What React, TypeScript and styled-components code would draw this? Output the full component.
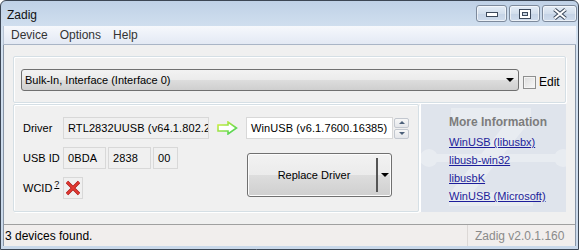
import styled, { createGlobalStyle } from 'styled-components'

const Global = createGlobalStyle`
  html, body {
    margin: 0;
    padding: 0;
    background: #ffffff;
  }
  body {
    font-family: "Liberation Sans", Arial, sans-serif;
    font-size: 11px;
    color: #000;
  }
`

const Window = styled.div`
  width: 579px;
  height: 250px;
  box-sizing: border-box;
  border: 1px solid #3c4654;
  border-radius: 6px 6px 0 0;
  background: linear-gradient(#bfd1e6, #d3e1f0 30px, #c9d8ea);
  padding: 0 2px 3px 2px;
  display: flex;
  flex-direction: column;
  overflow: hidden;
`

const TitleBar = styled.div`
  height: 25px;
  display: flex;
  align-items: flex-start;
  justify-content: space-between;
`

const Title = styled.div`
  font-size: 12px;
  color: #111;
  padding: 7px 0 0 4px;
`

const Caption = styled.div`
  display: flex;
  gap: 2px;
  padding-top: 4px;
  margin-right: -1px;
`

const CapButton = styled.div<{ $w: number }>`
  width: ${(p) => p.$w}px;
  height: 17px;
  box-sizing: border-box;
  border: 1px solid #7d8a9c;
  border-radius: 3px;
  background: linear-gradient(#e4edf7, #d2deec 50%, #c4d3e6 51%, #cfdcec);
  box-shadow: inset 0 0 0 1px rgba(255, 255, 255, 0.6);
  display: flex;
  align-items: center;
  justify-content: center;
`

const MenuBar = styled.div`
  height: 18px;
  display: flex;
  align-items: center;
  background: linear-gradient(#f6f8fc, #e3e9f4);
  border-bottom: 1px solid #a9b5c6;
  border-left: 1px solid #b8c4d4;
  padding-left: 2px;
`

const MenuItem = styled.div`
  font-size: 12px;
  color: #333;
  padding: 0 7px 0 5px;
`

const Client = styled.div`
  flex: 1;
  background: #f0f0f0;
  border-left: 1px solid #8895a6;
  border-right: 1px solid #8895a6;
  display: flex;
  flex-direction: column;
  padding: 11px 9px 0 9px;
`

const GroupBox = styled.div`
  box-sizing: border-box;
  border: 1px solid #d5dfe5;
  border-radius: 2px;
  box-shadow: inset 1px 1px 0 #ffffff, 1px 1px 0 #ffffff;
`

const TopGroup = styled(GroupBox)`
  height: 47px;
  padding: 12px 0 0 7px;
  display: flex;
  align-items: flex-start;
  gap: 4px;
`

const Combo = styled.div`
  width: 498px;
  height: 22px;
  box-sizing: border-box;
  border: 1px solid #707070;
  border-radius: 3px;
  background: linear-gradient(#f2f2f2, #ebebeb 50%, #dddddd 51%, #cfcfcf);
  display: flex;
  align-items: center;
  justify-content: space-between;
  padding: 0 4px 0 3px;
`

const DownArrow = styled.div<{ $size?: number }>`
  width: 0;
  height: 0;
  border-left: ${(p) => p.$size ?? 4}px solid transparent;
  border-right: ${(p) => p.$size ?? 4}px solid transparent;
  border-top: ${(p) => p.$size ?? 4}px solid #000;
`

const CheckRow = styled.label`
  display: flex;
  align-items: center;
  gap: 3px;
  margin-top: 6px;
  font-size: 12px;
`

const CheckBox = styled.div`
  width: 13px;
  height: 13px;
  box-sizing: border-box;
  border: 1px solid #8e8f8f;
  background: linear-gradient(135deg, #dcdcdc, #f8f8f8);
  box-shadow: inset 0 0 0 1px #f4f4f4;
`

const Lower = styled.div`
  display: flex;
  gap: 1px;
  margin-top: 1px;
  height: 108px;
`

const DriverGroup = styled(GroupBox)`
  width: 406px;
  padding: 12px 0 0 9px;
  display: grid;
  grid-template-columns: 40px 146px 37px 163px;
  grid-template-rows: 22px 22px 22px;
  row-gap: 8px;
  align-items: center;
`

const Label = styled.div<{ $col?: number }>`
  grid-column: ${(p) => p.$col ?? 'auto'};
  font-size: 11px;
  color: #000;
`

const Sup = styled.sup`
  font-size: 9px;
  text-decoration: underline;
  margin-left: 2px;
  vertical-align: 5px;
  line-height: 0;
`

const Field = styled.div<{ $w?: number; $white?: boolean; $icon?: boolean }>`
  width: ${(p) => (p.$w ? `${p.$w}px` : '100%')};
  height: 22px;
  box-sizing: border-box;
  border: 1px solid #d8d8d8;
  background: ${(p) => (p.$white ? '#ffffff' : '#f0f0f0')};
  padding: ${(p) => (p.$icon ? '0' : '0 0 0 4px')};
  display: flex;
  align-items: center;
  justify-content: ${(p) => (p.$icon ? 'center' : 'flex-start')};
  white-space: nowrap;
  overflow: hidden;
  font-size: 11px;
  letter-spacing: 0.1px;
`

const IdRow = styled.div`
  display: flex;
  gap: 2px;
`

const ArrowCell = styled.div`
  display: flex;
  justify-content: center;
`

const TargetRow = styled.div`
  display: flex;
  gap: 1px;
  align-items: center;
`

const Spinner = styled.div`
  display: flex;
  flex-direction: column;
  gap: 1px;
`

const SpinButton = styled.div`
  width: 15px;
  height: 10px;
  box-sizing: border-box;
  border: 1px solid #c2c7cf;
  border-radius: 2px;
  background: linear-gradient(#f7f7f7, #e4e6ea);
  display: flex;
  align-items: center;
  justify-content: center;
`

const SpinTri = styled.div<{ $up?: boolean }>`
  width: 0;
  height: 0;
  border-left: 3px solid transparent;
  border-right: 3px solid transparent;
  ${(p) => (p.$up ? 'border-bottom: 3px solid #4c607a;' : 'border-top: 3px solid #4c607a;')}
`

const ReplaceButton = styled.div`
  grid-column: 4;
  grid-row: 2 / 4;
  align-self: start;
  margin: 6px 0 0 1px;
  width: 145px;
  height: 44px;
  box-sizing: border-box;
  border: 1px solid #707070;
  border-radius: 3px;
  background: linear-gradient(#f2f2f2, #ebebeb 50%, #dddddd 51%, #cfcfcf);
  box-shadow: inset 0 0 0 1px #fcfcfc;
  display: flex;
  align-items: center;
`

const ReplaceLabel = styled.div`
  flex: 1;
  text-align: center;
  font-size: 11px;
  padding-left: 4px;
`

const SplitPart = styled.div`
  width: 13px;
  align-self: stretch;
  margin: 4px 0;
  border-left: 2px solid #555;
  display: flex;
  align-items: center;
  justify-content: center;
`

const InfoPanel = styled.div`
  width: 146px;
  position: relative;
  overflow: hidden;
  background: #dfe4ec;
  border-left: 1px solid #ffffff;
  padding: 11px 0 0 28px;
  box-sizing: border-box;
  display: flex;
  flex-direction: column;
`

const Watermark = styled.svg`
  position: absolute;
  left: 0;
  top: 0;
`

const InfoTitle = styled.div`
  position: relative;
  font-size: 12px;
  font-weight: bold;
  color: #7c7c7c;
  line-height: 14px;
  margin-bottom: 4px;
`

const InfoLink = styled.a`
  position: relative;
  font-size: 11px;
  color: #1d1d9a;
  text-decoration: underline;
  line-height: 18px;
`

const StatusBar = styled.div`
  margin: 12px -9px 0;
  height: 22px;
  box-sizing: border-box;
  border-top: 1px solid #a0a0a0;
  background: #f1eeed;
  display: flex;
  align-items: center;
`

const StatusText = styled.div`
  flex: 1;
  font-size: 12px;
  padding-left: 1px;
`

const StatusVersion = styled.div`
  width: 100px;
  align-self: stretch;
  display: flex;
  align-items: center;
  padding-left: 7px;
  border-left: 1px solid #dcd8d6;
  font-size: 12px;
  color: #8a8a8a;
`

const GreenArrow = () => (
  <svg width="21" height="14" viewBox="0 0 21 14">
    <defs>
      <linearGradient id="ga" x1="0" y1="0" x2="1" y2="1">
        <stop offset="0" stopColor="#d8f03a" />
        <stop offset="1" stopColor="#39d05a" />
      </linearGradient>
    </defs>
    <polygon
      points="1,4 11,4 11,1 19.5,7 11,13 11,10 1,10"
      fill="#ffffff"
      stroke="url(#ga)"
      strokeWidth="1.6"
    />
  </svg>
)

const RedX = () => (
  <svg width="16" height="16" viewBox="0 0 16 16">
    <path d="M2 2 L14 14 M14 2 L2 14" stroke="#a51212" strokeWidth="3.2" />
    <path d="M2 2 L14 14 M14 2 L2 14" stroke="#e23a32" strokeWidth="2" />
  </svg>
)

const App = () => {
  return (
    <>
      <Global />
      <Window>
        <TitleBar>
          <Title>Zadig</Title>
          <Caption>
            <CapButton $w={31}>
              <svg width="12" height="6" viewBox="0 0 12 6">
                <rect x="0.5" y="1.5" width="11" height="4" fill="#fff" stroke="#3d4a5c" />
              </svg>
            </CapButton>
            <CapButton $w={31}>
              <svg width="12" height="10" viewBox="0 0 12 10">
                <rect x="0.5" y="0.5" width="11" height="9" fill="#fff" stroke="#3d4a5c" />
                <rect x="3.5" y="3.5" width="5" height="3" fill="#c8d4e2" stroke="#3d4a5c" />
              </svg>
            </CapButton>
            <CapButton $w={35}>
              <svg width="16" height="12" viewBox="0 0 16 12">
                <path d="M2.5 1.5 L13.5 10.5 M13.5 1.5 L2.5 10.5" stroke="#3d4a5c" strokeWidth="4" />
                <path d="M2.5 1.5 L13.5 10.5 M13.5 1.5 L2.5 10.5" stroke="#ffffff" strokeWidth="2" />
              </svg>
            </CapButton>
          </Caption>
        </TitleBar>
        <MenuBar>
          <MenuItem>Device</MenuItem>
          <MenuItem>Options</MenuItem>
          <MenuItem>Help</MenuItem>
        </MenuBar>
        <Client>
          <TopGroup>
            <Combo>
              <span>Bulk-In, Interface (Interface 0)</span>
              <DownArrow />
            </Combo>
            <CheckRow>
              <CheckBox />
              Edit
            </CheckRow>
          </TopGroup>
          <Lower>
            <DriverGroup>
              <Label>Driver</Label>
              <Field>RTL2832UUSB (v64.1.802.20</Field>
              <ArrowCell>
                <GreenArrow />
              </ArrowCell>
              <TargetRow>
                <Field $w={147} $white>WinUSB (v6.1.7600.16385)</Field>
                <Spinner>
                  <SpinButton>
                    <SpinTri $up />
                  </SpinButton>
                  <SpinButton>
                    <SpinTri />
                  </SpinButton>
                </Spinner>
              </TargetRow>

              <Label>USB ID</Label>
              <IdRow>
                <Field $w={43}>0BDA</Field>
                <Field $w={43}>2838</Field>
                <Field $w={25}>00</Field>
              </IdRow>
              <ReplaceButton>
                <ReplaceLabel>Replace Driver</ReplaceLabel>
                <SplitPart>
                  <DownArrow />
                </SplitPart>
              </ReplaceButton>

              <Label $col={1}>
                WCID<Sup>?</Sup>
              </Label>
              <Field $w={20} $icon>
                <RedX />
              </Field>
            </DriverGroup>
            <InfoPanel>
              <Watermark width="146" height="108" viewBox="0 0 146 108">
                <g fill="#ffffff" opacity="0.3">
                  <polygon points="30,4 110,4 110,16 52,88 112,88 112,102 28,102 28,90 86,18 30,18" />
                  <rect x="6" y="50" width="134" height="8" />
                  <circle cx="8" cy="54" r="9" />
                  <circle cx="142" cy="54" r="9" />
                </g>
              </Watermark>
              <InfoTitle>More Information</InfoTitle>
              <InfoLink>WinUSB (libusbx)</InfoLink>
              <InfoLink>libusb-win32</InfoLink>
              <InfoLink>libusbK</InfoLink>
              <InfoLink>WinUSB (Microsoft)</InfoLink>
            </InfoPanel>
          </Lower>
          <StatusBar>
            <StatusText>3 devices found.</StatusText>
            <StatusVersion>Zadig v2.0.1.160</StatusVersion>
          </StatusBar>
        </Client>
      </Window>
    </>
  )
}

export default App
